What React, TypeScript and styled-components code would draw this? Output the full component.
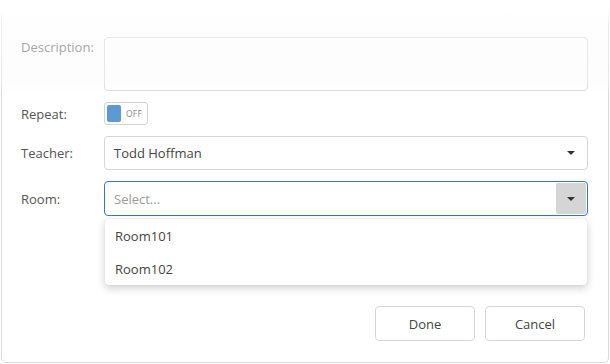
import React from 'react';
import styled, { createGlobalStyle } from 'styled-components';

const GlobalStyle = createGlobalStyle`
  html, body {
    margin: 0;
    padding: 0;
    background: #ffffff;
  }
  body {
    font-family: "Open Sans", "Noto Sans", sans-serif;
    font-size: 13px;
    color: #444444;
  }
`;

const Page = styled.div`
  width: 610px;
  height: 364px;
  padding-left: 1px;
  box-sizing: border-box;
`;

const Dialog = styled.div`
  position: relative;
  width: 608px;
  height: 363px;
  box-sizing: border-box;
  border: 1px solid #d9d9d9;
  border-radius: 0 0 5px 5px;
  background: #ffffff;
  padding: 36px 20px 0 19px;
`;

// scroll fade on top of the form
const TopFade = styled.div`
  position: absolute;
  left: -1px;
  right: -1px;
  top: -1px;
  height: 96px;
  pointer-events: none;
  background: linear-gradient(
    to bottom,
    #ffffff 0px,
    #ffffff 8px,
    rgba(252, 252, 252, 0.5) 24px,
    rgba(250, 250, 250, 0.45) 80px,
    rgba(255, 255, 255, 0) 96px
  );
`;

const Form = styled.div`
  display: flex;
  flex-direction: column;
  gap: 11px;
`;

const Row = styled.div<{ $top?: boolean }>`
  display: grid;
  grid-template-columns: 83px 1fr;
  align-items: ${(p) => (p.$top ? 'start' : 'center')};
`;

const Label = styled.label<{ $top?: boolean }>`
  color: #555555;
  padding-top: ${(p) => (p.$top ? '1px' : '0')};
  line-height: 18px;
`;

const TextArea = styled.div`
  height: 54px;
  box-sizing: border-box;
  border: 1px solid #d6d6d6;
  border-radius: 4px;
  background: #ffffff;
`;

const Switch = styled.div`
  width: 44px;
  height: 23px;
  box-sizing: border-box;
  border: 1px solid #d4d4d4;
  border-radius: 3px;
  display: flex;
  align-items: center;
  padding: 0 2px;
  gap: 5px;
`;

const Knob = styled.span`
  width: 14px;
  height: 17px;
  border-radius: 2px;
  background: #5b9bd5;
`;

const SwitchText = styled.span`
  font-size: 8.5px;
  color: #888888;
  letter-spacing: 0.2px;
`;

const SelectWrap = styled.div`
  position: relative;
`;

const Select = styled.div<{ $focused?: boolean }>`
  height: ${(p) => (p.$focused ? '35px' : '34px')};
  box-sizing: border-box;
  border: 1px solid ${(p) => (p.$focused ? '#3277c4' : '#d6d6d6')};
  border-radius: 4px;
  display: flex;
  align-items: center;
  padding: 0 1px 0 9px;
  background: #ffffff;
`;

const Value = styled.span<{ $placeholder?: boolean }>`
  flex: 1;
  color: ${(p) => (p.$placeholder ? '#9a9a9a' : '#444444')};
`;

const ArrowButton = styled.span<{ $active?: boolean }>`
  width: 30px;
  height: ${(p) => (p.$active ? '31px' : '30px')};
  display: flex;
  align-items: center;
  justify-content: center;
  background: ${(p) => (p.$active ? '#d5d5d5' : 'transparent')};
  border-radius: 2px;
`;

const Caret = () => (
  <svg width="8" height="4" viewBox="0 0 8 4">
    <path d="M0 0 H8 L4 4 Z" fill="#333333" />
  </svg>
);

const Popup = styled.ul`
  position: absolute;
  left: 1px;
  right: 1px;
  top: 38px;
  margin: 0;
  padding: 0;
  list-style: none;
  background: #ffffff;
  border-radius: 4px;
  box-shadow: 0 3px 8px rgba(0, 0, 0, 0.2), 0 0 1px rgba(0, 0, 0, 0.15);
  z-index: 2;
`;

const Option = styled.li`
  height: 33px;
  display: flex;
  align-items: center;
  padding-left: 10px;
  color: #444444;
`;

const Footer = styled.div`
  display: flex;
  justify-content: flex-end;
  gap: 10px;
  margin-top: 90px;
  padding-right: 3px;
`;

const Button = styled.button`
  width: 100px;
  height: 35px;
  box-sizing: border-box;
  border: 1px solid #d6d6d6;
  border-radius: 4px;
  background: #ffffff;
  font: inherit;
  color: #444444;
`;

export default function App() {
  return (
    <>
      <GlobalStyle />
      <Page>
        <Dialog>
          <Form>
            <Row $top>
              <Label $top>Description:</Label>
              <TextArea />
            </Row>
            <Row>
              <Label>Repeat:</Label>
              <Switch>
                <Knob />
                <SwitchText>OFF</SwitchText>
              </Switch>
            </Row>
            <Row>
              <Label>Teacher:</Label>
              <Select>
                <Value>Todd Hoffman</Value>
                <ArrowButton>
                  <Caret />
                </ArrowButton>
              </Select>
            </Row>
            <Row>
              <Label>Room:</Label>
              <SelectWrap>
                <Select $focused>
                  <Value $placeholder>Select...</Value>
                  <ArrowButton $active>
                    <Caret />
                  </ArrowButton>
                </Select>
                <Popup>
                  <Option>Room101</Option>
                  <Option>Room102</Option>
                </Popup>
              </SelectWrap>
            </Row>
          </Form>
          <Footer>
            <Button>Done</Button>
            <Button>Cancel</Button>
          </Footer>
          <TopFade />
        </Dialog>
      </Page>
    </>
  );
}
